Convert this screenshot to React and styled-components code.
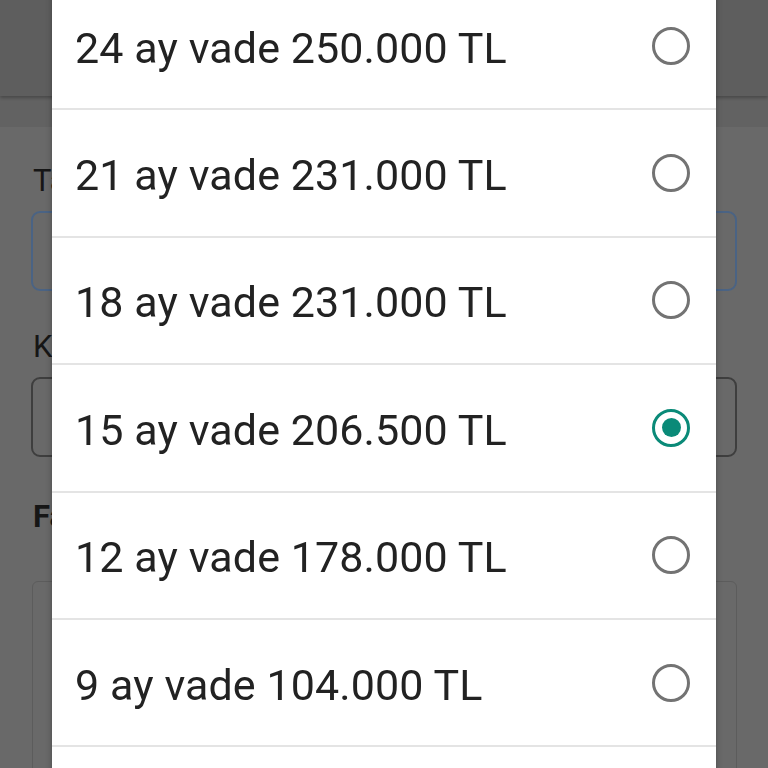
import React from "react";
import styled, { createGlobalStyle } from "styled-components";

const Global = createGlobalStyle`
  html, body { margin: 0; padding: 0; background: #6a6a6a; }
  body { font-family: Roboto, "Noto Sans", sans-serif; overflow: hidden; }
`;

const Page = styled.div`
  width: 768px;
  height: 768px;
  background: #696969;
  display: flex;
  flex-direction: column;
  overflow: hidden;
`;

const Header = styled.div`
  height: 96px;
  background: #5e5e5e;
  box-shadow: 0 2px 3px rgba(0, 0, 0, 0.25);
  flex-shrink: 0;
  position: relative;
  z-index: 1;
`;

const SubBar = styled.div`
  height: 31px;
  background: #626262;
  flex-shrink: 0;
`;

const Form = styled.div`
  display: flex;
  flex-direction: column;
  padding: 36px 31px 0 31px;
`;

const Label = styled.div`
  font-size: 31px;
  font-weight: ${(p) => (p.$bold ? 700 : 400)};
  color: #161616;
  line-height: 36px;
  padding-left: 2px;
  margin-bottom: ${(p) => p.$mb}px;
`;

const Input = styled.div`
  height: 80px;
  box-sizing: border-box;
  border: 2px solid ${(p) => (p.$focus ? "#4a6384" : "#3e3e3e")};
  border-radius: 9px;
  margin-bottom: ${(p) => p.$mb}px;
  width: 706px;
`;

const Card = styled.div`
  height: 260px;
  box-sizing: border-box;
  border: 1.5px solid #5c5c5c;
  border-radius: 6px;
  width: 705px;
  margin-left: 1px;
`;

const Overlay = styled.div`
  position: fixed;
  inset: 0;
  z-index: 10;
  display: flex;
  justify-content: center;
  align-items: flex-start;
  overflow: hidden;
`;

const Dialog = styled.div`
  width: 664px;
  margin-top: -17px;
  background: #fff;
  display: flex;
  flex-direction: column;
  flex-shrink: 0;
  box-shadow: 0 0 6px rgba(0, 0, 0, 0.3);
`;

const Row = styled.div`
  height: 127.4px;
  box-sizing: border-box;
  border-bottom: 2px solid #e4e4e4;
  display: flex;
  align-items: center;
  justify-content: space-between;
  padding: 0 26px 0 23px;
  flex-shrink: 0;
`;

const RowText = styled.span`
  font-family: Roboto, "Noto Sans", sans-serif;
  font-size: 43px;
  color: #222;
  padding-top: 4px;
  letter-spacing: 0.1px;
`;

const Radio = styled.span`
  width: 38px;
  height: 38px;
  box-sizing: border-box;
  border-radius: 50%;
  border: 3.8px solid ${(p) => (p.$checked ? "#0a8a78" : "#737373")};
  display: flex;
  align-items: center;
  justify-content: center;
  &::after {
    content: "";
    display: ${(p) => (p.$checked ? "block" : "none")};
    width: 19px;
    height: 19px;
    border-radius: 50%;
    background: #0a8a78;
  }
`;

const options = [
  { label: "24 ay vade 250.000 TL" },
  { label: "21 ay vade 231.000 TL" },
  { label: "18 ay vade 231.000 TL" },
  { label: "15 ay vade 206.500 TL", checked: true },
  { label: "12 ay vade 178.000 TL" },
  { label: "9 ay vade 104.000 TL" },
  { label: "6 ay vade 78.000 TL" },
];

export default function App() {
  return (
    <>
      <Global />
      <Page>
        <Header />
        <SubBar />
        <Form>
          <Label $mb={12}>Taksit</Label>
          <Input $focus $mb={38} />
          <Label $mb={12}>Kredi</Label>
          <Input $mb={42} />
          <Label $bold $mb={46}>Fatura</Label>
          <Card />
        </Form>
      </Page>
      <Overlay>
        <Dialog>
          {options.map((o) => (
            <Row key={o.label}>
              <RowText>{o.label}</RowText>
              <Radio $checked={o.checked} />
            </Row>
          ))}
        </Dialog>
      </Overlay>
    </>
  );
}
